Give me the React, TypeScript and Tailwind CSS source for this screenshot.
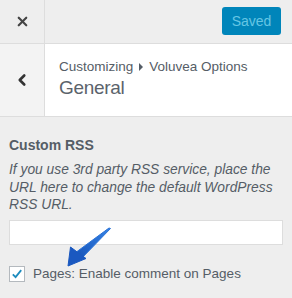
import { X, ChevronLeft } from 'lucide-react';

const FONT = { fontFamily: '"Liberation Sans", Arial, sans-serif' };

export default function App() {
  return (
    <div className="w-[292px] h-[298px] bg-[#eeeeee] text-[#555d66] overflow-hidden" style={FONT}>
      {/* barra superior */}
      <div className="flex h-[44px] border-b border-[#dddddd] bg-[#eeeeee]">
        <div className="flex w-[45px] items-center justify-center border-r border-[#dddddd]">
          <X size={15} strokeWidth={3.5} className="text-[#444]" />
        </div>
        <div className="flex flex-1 items-start justify-end pt-[7px] pr-[11px]">
          <button
            type="button"
            className="h-[28px] w-[59px] rounded-[3px] bg-[#0085ba] text-[14px] text-[#66c6e4]"
          >
            Saved
          </button>
        </div>
      </div>

      {/* cabecera de la sección */}
      <div className="flex h-[73px] border-b border-[#dddddd] bg-white">
        <div className="flex w-[45px] items-center justify-center border-r border-[#dddddd] bg-[#f3f3f3]">
          <ChevronLeft size={18} strokeWidth={3.5} className="text-[#333]" />
        </div>
        <div className="flex flex-col pl-[14px] pt-[14px]">
          <div className="flex items-center text-[13.5px] leading-[18px] text-[#555d66]">
            Customizing
            <span className="mx-[6px] inline-block h-0 w-0 border-y-[4px] border-l-[4px] border-y-transparent border-l-[#555d66]" />
            Voluvea Options
          </div>
          <div className="text-[19px] leading-[24px] tracking-[-0.3px] text-[#5b636b]">General</div>
        </div>
      </div>

      {/* controles */}
      <div className="relative px-[9px] pt-[18px]">
        <div className="text-[14px] font-bold leading-[20px] text-[#555d66]">Custom RSS</div>
        <p className="mt-[6px] text-[13.8px] italic leading-[17.5px] text-[#555d66]">
          If you use 3rd party RSS service, place the URL here to change the default WordPress RSS URL.
        </p>
        <input
          type="text"
          className="mt-[6px] block h-[25px] w-full border border-[#dddddd] bg-white"
        />
        <label className="mt-[19px] flex items-center gap-[8px] text-[13.5px] text-[#555d66]">
          <span className="flex h-[16px] w-[16px] items-center justify-center border border-[#b4b9be] bg-white">
            <svg width="14" height="14" viewBox="0 0 20 20">
              <path d="M4 10.5 L8 14.5 L16 4.5" fill="none" stroke="#1e8cbe" strokeWidth="2.6" />
            </svg>
          </span>
          Pages: Enable comment on Pages
        </label>

        {/* flecha indicadora */}
        <svg
          className="pointer-events-none absolute left-[62px] top-[108px]"
          width="52"
          height="44"
          viewBox="0 0 52 44"
        >
          <defs>
            <linearGradient id="arrowGrad" x1="1" y1="0" x2="0" y2="1">
              <stop offset="0" stopColor="#3583e6" />
              <stop offset="1" stopColor="#1552b8" />
            </linearGradient>
          </defs>
          <path d="M48.5 3.5 L47 3 L13 28 L19 34 Z" fill="url(#arrowGrad)" stroke="#2a72d6" strokeWidth="1" strokeLinejoin="round" />
          <path d="M6 41 L8.5 22 L24 33.5 Z" fill="#1a58c0" stroke="#1a58c0" strokeWidth="1" strokeLinejoin="round" />
        </svg>
      </div>
    </div>
  );
}
